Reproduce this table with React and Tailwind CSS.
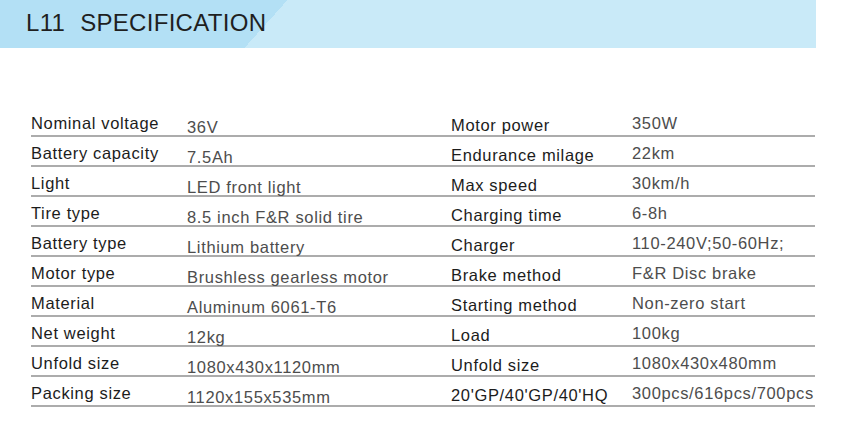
const left = [
  ["Nominal voltage", "36V"],
  ["Battery capacity", "7.5Ah"],
  ["Light", "LED front light"],
  ["Tire type", "8.5 inch F&R solid tire"],
  ["Battery type", "Lithium battery"],
  ["Motor type", "Brushless gearless motor"],
  ["Material", "Aluminum 6061-T6"],
  ["Net weight", "12kg"],
  ["Unfold size", "1080x430x1120mm"],
  ["Packing size", "1120x155x535mm"],
];
const right = [
  ["Motor power", "350W"],
  ["Endurance milage", "22km"],
  ["Max speed", "30km/h"],
  ["Charging time", "6-8h"],
  ["Charger", "110-240V;50-60Hz;"],
  ["Brake method", "F&R Disc brake"],
  ["Starting method", "Non-zero start"],
  ["Load", "100kg"],
  ["Unfold size", "1080x430x480mm"],
  ["20'GP/40'GP/40'HQ", "300pcs/616pcs/700pcs"],
];

export default function App() {
  return (
    <div className="w-[847px] h-[429px] bg-white overflow-hidden" style={{ fontFamily: '"Liberation Sans", Arial, sans-serif' }}>
      <div className="w-[816px] h-[48px] bg-[linear-gradient(131.9deg,#b3e0f5_214px,#c9eaf8_214px)] flex items-center pl-[26px]">
        <span className="text-[24px] leading-none text-[#1f1f1f] tracking-[0.3px] mt-[-2px]">L11</span>
        <span className="text-[24px] leading-none text-[#1f1f1f] tracking-[0.3px] ml-[15px] mt-[-2px]">SPECIFICATION</span>
      </div>
      <div className="mt-[59px] ml-[31px] w-[784px] flex flex-col">
        {left.map((l, i) => (
          <div key={i} className="h-[30px] border-b-2 border-[#acacac] flex text-[16.5px] leading-[19px] tracking-[0.65px]">
            <div className="w-[156px] pt-[7px] text-[#1c1c1c] whitespace-nowrap">{l[0]}</div>
            <div className="w-[264px] pt-[11px] text-[#4d4d4d] whitespace-nowrap">{l[1]}</div>
            <div className="w-[181px] pt-[9px] text-[#1c1c1c] whitespace-nowrap">{right[i][0]}</div>
            <div className="flex-1 pt-[7px] text-[#4d4d4d] whitespace-nowrap">{right[i][1]}</div>
          </div>
        ))}
      </div>
    </div>
  );
}
